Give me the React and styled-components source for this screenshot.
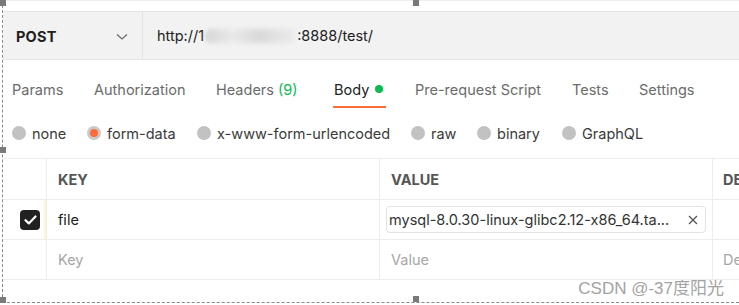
import * as React from 'react';
import styled, { createGlobalStyle } from 'styled-components';

const Global = createGlobalStyle`
  html, body {
    margin: 0;
    padding: 0;
    background: #ffffff;
    overflow: hidden;
  }
  body {
    font-family: Inter, "Noto Sans", "Liberation Sans", sans-serif;
    font-size: 14.5px;
    color: #212121;
  }
`;

const Frame = styled.div`
  position: relative;
  width: 739px;
  height: 305px;
  box-sizing: border-box;
  padding: 0 0 0 3px;
  display: flex;
  flex-flow: column;
  overflow: hidden;
  &::before {
    content: '';
    position: absolute;
    left: 2px;
    top: 0;
    bottom: 3px;
    border-left: 1px dashed #8a8a8a;
  }
  &::after {
    content: '';
    position: absolute;
    left: 2px;
    right: 0;
    top: 302px;
    border-top: 1px dashed #8a8a8a;
  }
`;

const Handle = styled.div`
  position: absolute;
  width: 6px;
  height: 6px;
  background: #7a7a7a;
  z-index: 2;
`;

const TopStrip = styled.div`
  flex: 0 0 auto;
  height: 10px;
  border-top: 1px solid #eeeeee;
`;

const RequestBar = styled.div`
  flex: 0 0 auto;
  height: 47px;
  display: flex;
  background: #f2f2f2;
  border-top: 1px solid #e6e6e6;
  border-bottom: 1px solid #e6e6e6;
`;

const Method = styled.div`
  flex: 0 0 auto;
  width: 140px;
  box-sizing: border-box;
  padding: 2px 14px 0 13px;
  display: flex;
  align-items: center;
  justify-content: space-between;
  border-right: 1px solid #e3e3e3;
  font-weight: 700;
  color: #212121;
  letter-spacing: 0.2px;
`;

const Url = styled.div`
  flex: 1 1 auto;
  display: flex;
  align-items: center;
  padding: 0 0 0 14px;
  color: #212121;
`;

const Blur = styled.span`
  display: inline-block;
  width: 91px;
  height: 14px;
  margin: 0 1px;
  border-radius: 6px;
  background: linear-gradient(90deg, #d6d6d6, #e9e9e9 30%, #d9d9d9 60%, #ececec);
  filter: blur(2px);
`;

const Tabs = styled.div`
  flex: 0 0 auto;
  height: 50px;
  display: flex;
  align-items: stretch;
  padding-left: 9px;
`;

const Tab = styled.div`
  position: relative;
  display: flex;
  align-items: center;
  padding-top: 8px;
  flex: 0 0 ${p => (p.$width ? `${p.$width}px` : 'auto')};
  color: ${p => (p.$active ? '#212121' : '#6b6b6b')};
  white-space: nowrap;
`;

const Underline = styled.span`
  position: absolute;
  left: -1px;
  width: 53px;
  top: 46px;
  height: 2px;
  background: #ff6c37;
`;

const Count = styled.span`
  color: #0cbb52;
  margin-left: 4px;
`;

const Dot = styled.span`
  display: inline-block;
  width: 8px;
  height: 8px;
  border-radius: 50%;
  background: #0cbb52;
  margin-left: 6px;
`;

const Radios = styled.div`
  flex: 0 0 auto;
  height: 48px;
  box-sizing: border-box;
  display: flex;
  align-items: center;
  padding: 0 0 2px 9px;
`;

const RadioItem = styled.label`
  display: flex;
  align-items: center;
  gap: 6px;
  flex: 0 0 ${p => (p.$width ? `${p.$width}px` : 'auto')};
  color: #3a3a3a;
  white-space: nowrap;
`;

const Circle = styled.span`
  width: 14px;
  height: 14px;
  border-radius: 50%;
  box-sizing: border-box;
  background: ${p => (p.$on ? '#ff6c37' : '#c2c2c2')};
  border: ${p => (p.$on ? '3px solid #c9c9c9' : 'none')};
`;

const Table = styled.div`
  flex: 0 0 auto;
  display: grid;
  grid-template-columns: 43px 333px 333px 1fr;
  border-top: 1px solid #ededed;
`;

const Cell = styled.div`
  height: ${p => (p.$head ? 40 : 39)}px;
  box-sizing: content-box;
  display: flex;
  align-items: center;
  padding-left: ${p => p.$pad ?? 11}px;
  border-bottom: 1px solid #ededed;
  border-left: ${p => (p.$first ? 'none' : '1px solid #ededed')};
  color: ${p => (p.$placeholder ? '#a6a6a6' : p.$head ? '#555555' : '#212121')};
  font-weight: ${p => (p.$head ? 700 : 400)};
  font-size: 14.5px;
  white-space: nowrap;
  overflow: hidden;
  position: relative;
`;

const Marker = styled.span`
  position: absolute;
  right: 0;
  top: 0;
  bottom: 0;
  width: 2px;
  background: #fff4d6;
`;

const Check = styled.span`
  width: 20px;
  height: 20px;
  margin-left: 17px;
  border-radius: 4px;
  background: #212121;
  display: flex;
  align-items: center;
  justify-content: center;
`;

const FileBox = styled.div`
  flex: 1 1 auto;
  margin: 0 6px 0 -5px;
  height: 27px;
  box-sizing: border-box;
  border: 1px solid #e3e3e3;
  border-radius: 4px;
  display: flex;
  align-items: center;
  justify-content: space-between;
  padding: 0 7px 0 2px;
  color: #333333;
`;

const Watermark = styled.div`
  align-self: flex-end;
  margin: 0 15px 0 0;
  font-family: "Liberation Sans", "Noto Sans CJK SC", sans-serif;
  font-size: 17px;
  color: #a3a3a3;
  line-height: 17px;
`;

const tabs = [
  { label: 'Params', width: 82 },
  { label: 'Authorization', width: 122 },
  { label: 'Headers', count: '(9)', width: 118 },
  { label: 'Body', active: true, width: 81 },
  { label: 'Pre-request Script', width: 157 },
  { label: 'Tests', width: 67 },
  { label: 'Settings' },
];

const radios = [
  { label: 'none', width: 75 },
  { label: 'form-data', width: 110 },
  { label: 'x-www-form-urlencoded', width: 214 },
  { label: 'raw', width: 66 },
  { label: 'binary', width: 85 },
  { label: 'GraphQL' },
];

export default function App() {
  return <Frame>
    <Global />
    <Handle style={{ left: 0, top: 0 }} />
    <Handle style={{ left: 413, top: 0 }} />
    <Handle style={{ left: 0, top: 147 }} />
    <Handle style={{ left: 0, top: 297 }} />
    <Handle style={{ left: 413, top: 296 }} />
    <TopStrip />
    <RequestBar>
      <Method>
        POST
        <svg width="12" height="8" viewBox="0 0 12 8" fill="none">
          <path d="M1 1.5l5 4.5 5-4.5" stroke="#6b6b6b" strokeWidth="1.3" />
        </svg>
      </Method>
      <Url>http://1<Blur />:8888/test/</Url>
    </RequestBar>
    <Tabs>
      {tabs.map(t => (
        <Tab key={t.label} $active={t.active} $width={t.width}>
          {t.label}
          {t.count && <Count>{t.count}</Count>}
          {t.active && <Dot />}
          {t.active && <Underline />}
        </Tab>
      ))}
    </Tabs>
    <Radios>
      {radios.map(r => (
        <RadioItem key={r.label} $width={r.width}>
          <Circle $on={r.label === 'form-data'} />
          {r.label}
        </RadioItem>
      ))}
    </Radios>
    <Table>
      <Cell $head $first $pad={0} />
      <Cell $head>KEY</Cell>
      <Cell $head>VALUE</Cell>
      <Cell $head $pad={10}>DE</Cell>

      <Cell $first $pad={0}>
        <Check>
          <svg width="13" height="10" viewBox="0 0 13 10" fill="none">
            <path d="M1.5 5.2l3.3 3.2L11.5 1.5" stroke="#ffffff" strokeWidth="2.2" strokeLinecap="round" strokeLinejoin="round" />
          </svg>
        </Check>
        <Marker />
      </Cell>
      <Cell>file</Cell>
      <Cell>
        <FileBox>
          mysql-8.0.30-linux-glibc2.12-x86_64.ta...
          <svg width="10" height="10" viewBox="0 0 10 10">
            <path d="M1 1l8 8M9 1L1 9" stroke="#555555" strokeWidth="1.3" />
          </svg>
        </FileBox>
      </Cell>
      <Cell $pad={10} />

      <Cell $first $pad={0} />
      <Cell $placeholder>Key</Cell>
      <Cell $placeholder>Value</Cell>
      <Cell $placeholder $pad={10}>De</Cell>
    </Table>
    <Watermark>CSDN @-37度阳光</Watermark>
  </Frame>;
}
